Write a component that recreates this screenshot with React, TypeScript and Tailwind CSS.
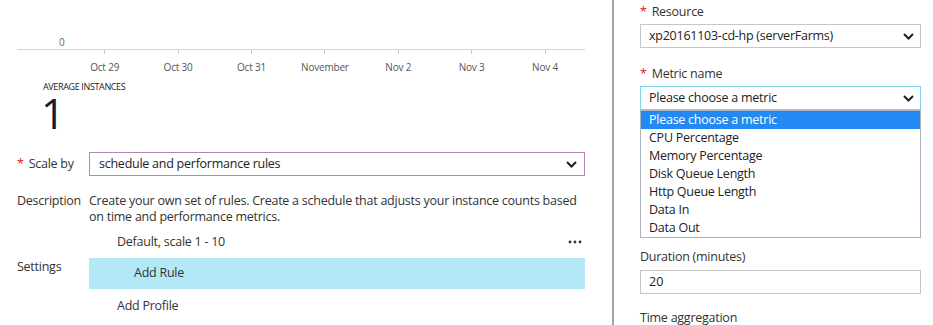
import React from "react";

const font = { fontFamily: '"Open Sans", "Noto Sans", sans-serif' };

const Chevron = () => (
  <svg width="11" height="7" viewBox="0 0 11 7" fill="none">
    <path d="M1 1l4.5 4.5L10 1" stroke="#222" strokeWidth="2" />
  </svg>
);

const Dots = () => (
  <svg width="14" height="4" viewBox="0 0 14 4">
    <circle cx="2" cy="2" r="1.4" fill="#333" />
    <circle cx="7" cy="2" r="1.4" fill="#333" />
    <circle cx="12" cy="2" r="1.4" fill="#333" />
  </svg>
);

const dates = ["Oct 29", "Oct 30", "Oct 31", "November", "Nov 2", "Nov 3", "Nov 4"];
const metrics = [
  "Please choose a metric",
  "CPU Percentage",
  "Memory Percentage",
  "Disk Queue Length",
  "Http Queue Length",
  "Data In",
  "Data Out",
];

function Label({ text, required }: { text: string; required?: boolean }) {
  return (
    <div className="h-[16px] text-[12.5px] tracking-[-0.25px] leading-[16px] text-[#333]">
      {required && <span className="text-[#e0202e] mr-[5px]">*</span>}
      {text}
    </div>
  );
}

function SelectBox({ value, focused }: { value: string; focused?: boolean }) {
  return (
    <div
      className={`mt-[4px] h-[24px] flex items-center justify-between border pl-[8px] pr-[6px] text-[12.5px] tracking-[-0.25px] text-[#222] ${
        focused ? "border-[#7fd3ec]" : "border-[#c6c6c6]"
      }`}
    >
      <span>{value}</span>
      <Chevron />
    </div>
  );
}

export default function App() {
  return (
    <div className="w-[933px] h-[325px] flex overflow-hidden bg-white" style={font}>
      {/* left blade */}
      <section className="w-[612px] shrink-0 pt-[36px]">
        <div className="ml-[17px] w-[568px]">
          <div className="h-[13px] pl-[42px] text-[10px] leading-[13px] text-[#666]">0</div>
          <div className="border-t border-[#d4d4d4] flex pl-[51px]">
            {dates.map((d) => (
              <div key={d} className="w-[73.4px] flex flex-col items-center">
                <div className="h-[4px] w-px bg-[#c8c8c8]" />
                <div className="mt-[7px] text-[10px] tracking-[-0.2px] leading-[12px] text-[#555] whitespace-nowrap">
                  {d}
                </div>
              </div>
            ))}
          </div>
        </div>
        <div className="ml-[43px] mt-[9px] text-[9px] leading-[10px] tracking-[-0.04em] text-[#222]">
          AVERAGE INSTANCES
        </div>
        <div className="ml-[41px] mt-[6px] h-[54px] text-[42px] leading-[30px] text-[#16192e]">1</div>

        <div className="ml-[17px] w-[568px] grid grid-cols-[72px_1fr] text-[12.5px] tracking-[-0.25px] text-[#333]">
          <div className="h-[24px] flex items-center">
            <span className="text-[#e0202e] mr-[5px]">*</span>Scale by
          </div>
          <div className="h-[24px] flex items-center justify-between border border-[#b683b6] pl-[9px] pr-[7px] text-[#222]">
            <span>schedule and performance rules</span>
            <Chevron />
          </div>

          <div className="mt-[17px] leading-[16px]">Description</div>
          <div className="mt-[17px] leading-[16px] text-[#333]">
            Create your own set of rules. Create a schedule that adjusts your instance counts based on time and
            performance metrics.
          </div>

          <div />
          <div className="mt-[9px] h-[16px] flex items-center justify-between pl-[28px] pr-[3px] leading-[16px]">
            <span>Default, scale 1 - 10</span>
            <Dots />
          </div>

          <div className="mt-[9px] leading-[16px]">Settings</div>
          <div className="mt-[8px] h-[31px] flex items-center bg-[#b3e8f7] pl-[45px]">Add Rule</div>

          <div />
          <div className="mt-[9px] pl-[28px] leading-[16px]">Add Profile</div>
        </div>
      </section>

      {/* divider */}
      <div className="w-[2px] shrink-0 bg-[#a3a3a3]" />

      {/* right blade */}
      <section className="flex-1 pl-[26px] pr-[12px] pt-[4px]">
        <Label text="Resource" required />
        <SelectBox value="xp20161103-cd-hp (serverFarms)" />

        <div className="mt-[18px]">
          <Label text="Metric name" required />
        </div>
        <div className="relative">
          <SelectBox value="Please choose a metric" focused />
          <ul className="absolute left-0 right-0 top-full z-10 border border-[#a8b2c2] bg-white text-[12.5px] tracking-[-0.25px] text-[#222]">
            {metrics.map((m, i) => (
              <li
                key={m}
                className={`h-[18px] leading-[18px] pl-[8px] ${i === 0 ? "bg-[#2389f3] text-white" : ""}`}
              >
                {m}
              </li>
            ))}
          </ul>
        </div>

        {/* room taken by the fields hidden under the open list */}
        <div className="h-[123px]" />

        <div className="mt-[16px]">
          <Label text="Duration (minutes)" />
        </div>
        <div className="mt-[5px] h-[24px] flex items-center border border-[#c6c6c6] pl-[8px] text-[12.5px] text-[#222]">
          20
        </div>
        <div className="mt-[16px]">
          <Label text="Time aggregation" />
        </div>
      </section>
    </div>
  );
}
